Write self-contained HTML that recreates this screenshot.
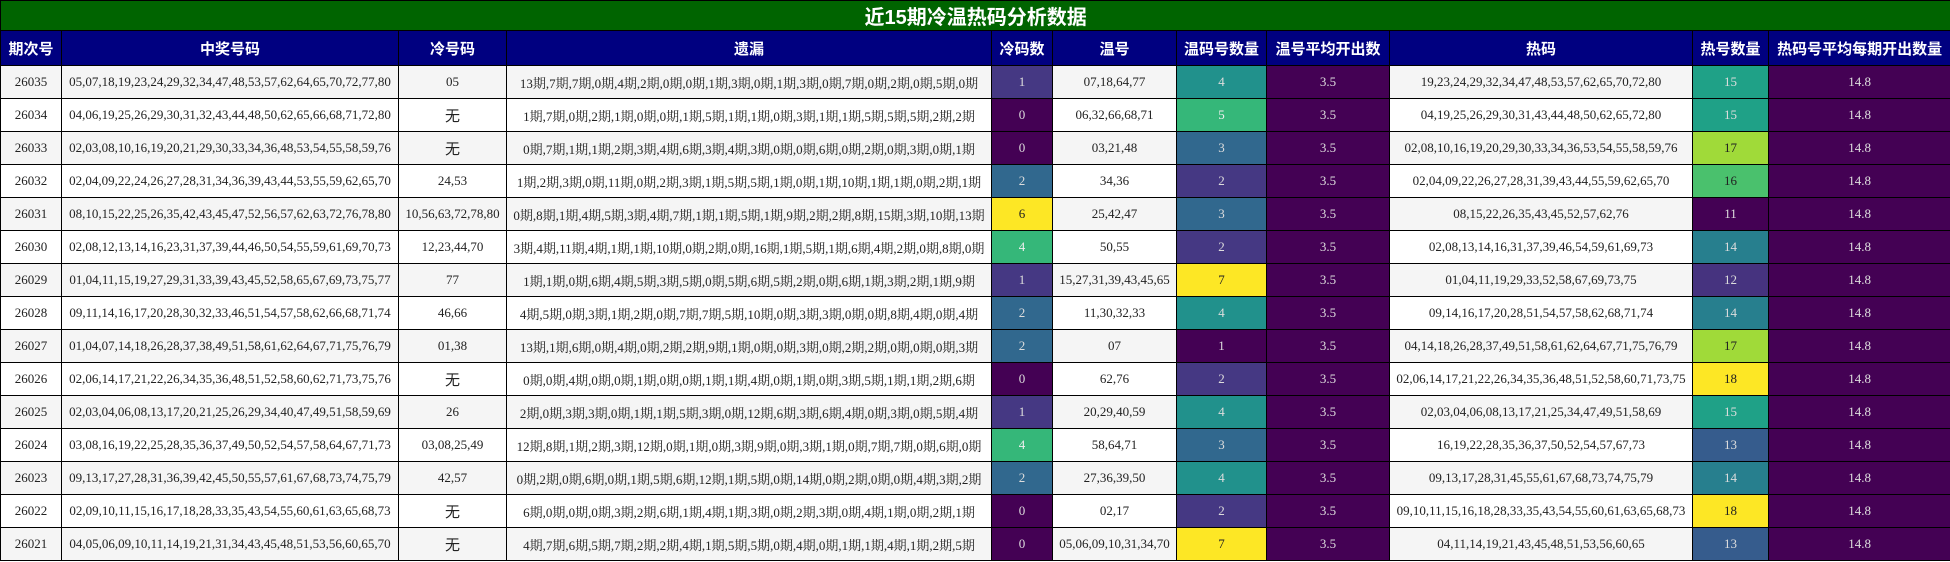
<!DOCTYPE html>
<html><head><meta charset="utf-8"><style>
html,body{margin:0;padding:0;background:#fff;width:1950px;height:562px;overflow:hidden}
table{border-collapse:collapse;table-layout:fixed;width:1950px;font-family:"Liberation Serif","Noto Serif CJK SC",serif;font-size:13px;color:#222}
td,th{border:1px solid #000;text-align:center;padding:0;white-space:nowrap;overflow:hidden}
.t{background:#006400;color:#fff;font:bold 20px "Liberation Sans","Noto Sans CJK SC",sans-serif;height:29px}
th{background:#000080;color:#fff;font:bold 15px "Liberation Sans","Noto Sans CJK SC",sans-serif;height:34px}
tr.r td{height:32px}
tr.r:nth-child(odd) td{background:#f5f5f5}
tr.r:nth-child(even) td{background:#fff}
tr.r td.w{font-family:"Liberation Sans","Noto Sans CJK SC",sans-serif;font-size:15px}
tr.r td.c0{background:#440154;color:#ddd}
tr.r td.c1{background:#453883;color:#ddd}
tr.r td.c2{background:#31688e;color:#ddd}
tr.r td.c3{background:#365c8d;color:#ddd}
tr.r td.c4{background:#21918c;color:#ddd}
tr.r td.c5{background:#35b779;color:#eee}
tr.r td.c6{background:#fde725;color:#222}
tr.r td.h12{background:#46337f;color:#ddd}
tr.r td.h14{background:#277f8e;color:#ddd}
tr.r td.h15{background:#1fa187;color:#ddd}
tr.r td.h16{background:#4ac16d;color:#222}
tr.r td.h17{background:#a0da39;color:#222}
tr.r td.p{background:#440154;color:#ddd}
</style></head><body>
<table>
<colgroup><col style="width:61px"><col style="width:337px"><col style="width:108px"><col style="width:485px"><col style="width:61px"><col style="width:124px"><col style="width:90px"><col style="width:123px"><col style="width:303px"><col style="width:76px"><col style="width:182px"></colgroup>
<tr><td class="t" colspan="11">近15期冷温热码分析数据</td></tr>
<tr><th>期次号</th><th>中奖号码</th><th>冷号码</th><th>遗漏</th><th>冷码数</th><th>温号</th><th>温码号数量</th><th>温号平均开出数</th><th>热码</th><th>热号数量</th><th>热码号平均每期开出数量</th></tr>
<tr class="r"><td>26035</td><td>05,07,18,19,23,24,29,32,34,47,48,53,57,62,64,65,70,72,77,80</td><td>05</td><td>13期,7期,7期,0期,4期,2期,0期,0期,1期,3期,0期,1期,3期,0期,7期,0期,2期,0期,5期,0期</td><td class="c1">1</td><td>07,18,64,77</td><td class="c4">4</td><td class="p">3.5</td><td>19,23,24,29,32,34,47,48,53,57,62,65,70,72,80</td><td class="h15">15</td><td class="p">14.8</td></tr>
<tr class="r"><td>26034</td><td>04,06,19,25,26,29,30,31,32,43,44,48,50,62,65,66,68,71,72,80</td><td class="w">无</td><td>1期,7期,0期,2期,1期,0期,0期,1期,5期,1期,1期,0期,3期,1期,1期,5期,5期,5期,2期,2期</td><td class="c0">0</td><td>06,32,66,68,71</td><td class="c5">5</td><td class="p">3.5</td><td>04,19,25,26,29,30,31,43,44,48,50,62,65,72,80</td><td class="h15">15</td><td class="p">14.8</td></tr>
<tr class="r"><td>26033</td><td>02,03,08,10,16,19,20,21,29,30,33,34,36,48,53,54,55,58,59,76</td><td class="w">无</td><td>0期,7期,1期,1期,2期,3期,4期,6期,3期,4期,3期,0期,0期,6期,0期,2期,0期,3期,0期,1期</td><td class="c0">0</td><td>03,21,48</td><td class="c2">3</td><td class="p">3.5</td><td>02,08,10,16,19,20,29,30,33,34,36,53,54,55,58,59,76</td><td class="h17">17</td><td class="p">14.8</td></tr>
<tr class="r"><td>26032</td><td>02,04,09,22,24,26,27,28,31,34,36,39,43,44,53,55,59,62,65,70</td><td>24,53</td><td>1期,2期,3期,0期,11期,0期,2期,3期,1期,5期,5期,1期,0期,1期,10期,1期,1期,0期,2期,1期</td><td class="c2">2</td><td>34,36</td><td class="c1">2</td><td class="p">3.5</td><td>02,04,09,22,26,27,28,31,39,43,44,55,59,62,65,70</td><td class="h16">16</td><td class="p">14.8</td></tr>
<tr class="r"><td>26031</td><td>08,10,15,22,25,26,35,42,43,45,47,52,56,57,62,63,72,76,78,80</td><td>10,56,63,72,78,80</td><td>0期,8期,1期,4期,5期,3期,4期,7期,1期,1期,5期,1期,9期,2期,2期,8期,15期,3期,10期,13期</td><td class="c6">6</td><td>25,42,47</td><td class="c2">3</td><td class="p">3.5</td><td>08,15,22,26,35,43,45,52,57,62,76</td><td class="c0">11</td><td class="p">14.8</td></tr>
<tr class="r"><td>26030</td><td>02,08,12,13,14,16,23,31,37,39,44,46,50,54,55,59,61,69,70,73</td><td>12,23,44,70</td><td>3期,4期,11期,4期,1期,1期,10期,0期,2期,0期,16期,1期,5期,1期,6期,4期,2期,0期,8期,0期</td><td class="c5">4</td><td>50,55</td><td class="c1">2</td><td class="p">3.5</td><td>02,08,13,14,16,31,37,39,46,54,59,61,69,73</td><td class="h14">14</td><td class="p">14.8</td></tr>
<tr class="r"><td>26029</td><td>01,04,11,15,19,27,29,31,33,39,43,45,52,58,65,67,69,73,75,77</td><td>77</td><td>1期,1期,0期,6期,4期,5期,3期,5期,0期,5期,6期,5期,2期,0期,6期,1期,3期,2期,1期,9期</td><td class="c1">1</td><td>15,27,31,39,43,45,65</td><td class="c6">7</td><td class="p">3.5</td><td>01,04,11,19,29,33,52,58,67,69,73,75</td><td class="h12">12</td><td class="p">14.8</td></tr>
<tr class="r"><td>26028</td><td>09,11,14,16,17,20,28,30,32,33,46,51,54,57,58,62,66,68,71,74</td><td>46,66</td><td>4期,5期,0期,3期,1期,2期,0期,7期,7期,5期,10期,0期,3期,3期,0期,0期,8期,4期,0期,4期</td><td class="c2">2</td><td>11,30,32,33</td><td class="c4">4</td><td class="p">3.5</td><td>09,14,16,17,20,28,51,54,57,58,62,68,71,74</td><td class="h14">14</td><td class="p">14.8</td></tr>
<tr class="r"><td>26027</td><td>01,04,07,14,18,26,28,37,38,49,51,58,61,62,64,67,71,75,76,79</td><td>01,38</td><td>13期,1期,6期,0期,4期,0期,2期,2期,9期,1期,0期,0期,3期,0期,2期,2期,0期,0期,0期,3期</td><td class="c2">2</td><td>07</td><td class="c0">1</td><td class="p">3.5</td><td>04,14,18,26,28,37,49,51,58,61,62,64,67,71,75,76,79</td><td class="h17">17</td><td class="p">14.8</td></tr>
<tr class="r"><td>26026</td><td>02,06,14,17,21,22,26,34,35,36,48,51,52,58,60,62,71,73,75,76</td><td class="w">无</td><td>0期,0期,4期,0期,0期,1期,0期,0期,1期,1期,4期,0期,1期,0期,3期,5期,1期,1期,2期,6期</td><td class="c0">0</td><td>62,76</td><td class="c1">2</td><td class="p">3.5</td><td>02,06,14,17,21,22,26,34,35,36,48,51,52,58,60,71,73,75</td><td class="c6">18</td><td class="p">14.8</td></tr>
<tr class="r"><td>26025</td><td>02,03,04,06,08,13,17,20,21,25,26,29,34,40,47,49,51,58,59,69</td><td>26</td><td>2期,0期,3期,3期,0期,1期,1期,5期,3期,0期,12期,6期,3期,6期,4期,0期,3期,0期,5期,4期</td><td class="c1">1</td><td>20,29,40,59</td><td class="c4">4</td><td class="p">3.5</td><td>02,03,04,06,08,13,17,21,25,34,47,49,51,58,69</td><td class="h15">15</td><td class="p">14.8</td></tr>
<tr class="r"><td>26024</td><td>03,08,16,19,22,25,28,35,36,37,49,50,52,54,57,58,64,67,71,73</td><td>03,08,25,49</td><td>12期,8期,1期,2期,3期,12期,0期,1期,0期,3期,9期,0期,3期,1期,0期,7期,7期,0期,6期,0期</td><td class="c5">4</td><td>58,64,71</td><td class="c2">3</td><td class="p">3.5</td><td>16,19,22,28,35,36,37,50,52,54,57,67,73</td><td class="c3">13</td><td class="p">14.8</td></tr>
<tr class="r"><td>26023</td><td>09,13,17,27,28,31,36,39,42,45,50,55,57,61,67,68,73,74,75,79</td><td>42,57</td><td>0期,2期,0期,6期,0期,1期,5期,6期,12期,1期,5期,0期,14期,0期,2期,0期,0期,4期,3期,2期</td><td class="c2">2</td><td>27,36,39,50</td><td class="c4">4</td><td class="p">3.5</td><td>09,13,17,28,31,45,55,61,67,68,73,74,75,79</td><td class="h14">14</td><td class="p">14.8</td></tr>
<tr class="r"><td>26022</td><td>02,09,10,11,15,16,17,18,28,33,35,43,54,55,60,61,63,65,68,73</td><td class="w">无</td><td>6期,0期,0期,0期,3期,2期,6期,1期,4期,1期,3期,0期,2期,3期,0期,4期,1期,0期,2期,1期</td><td class="c0">0</td><td>02,17</td><td class="c1">2</td><td class="p">3.5</td><td>09,10,11,15,16,18,28,33,35,43,54,55,60,61,63,65,68,73</td><td class="c6">18</td><td class="p">14.8</td></tr>
<tr class="r"><td>26021</td><td>04,05,06,09,10,11,14,19,21,31,34,43,45,48,51,53,56,60,65,70</td><td class="w">无</td><td>4期,7期,6期,5期,7期,2期,2期,4期,1期,5期,5期,0期,4期,0期,1期,1期,4期,1期,2期,5期</td><td class="c0">0</td><td>05,06,09,10,31,34,70</td><td class="c6">7</td><td class="p">3.5</td><td>04,11,14,19,21,43,45,48,51,53,56,60,65</td><td class="c3">13</td><td class="p">14.8</td></tr>
</table>
</body></html>
